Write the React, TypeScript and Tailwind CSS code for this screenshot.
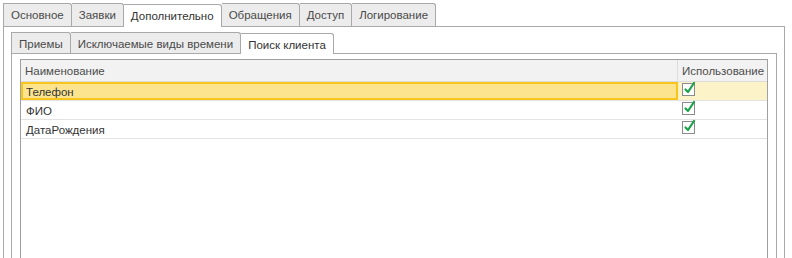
import React from 'react';

const outerTabs = ['Основное', 'Заявки', 'Дополнительно', 'Обращения', 'Доступ', 'Логирование'];
const innerTabs = ['Приемы', 'Исключаемые виды времени', 'Поиск клиента'];

const rows = [
  { name: 'Телефон', used: true },
  { name: 'ФИО', used: true },
  { name: 'ДатаРождения', used: true },
];

function CheckBox() {
  return (
    <svg width="17" height="17" viewBox="0 0 17 17" className="block">
      <rect x="0.5" y="3.5" width="12" height="12" fill="#fff" stroke="#8c8c8c" />
      <path d="M3.5 9.5 L6 12 L12 3" fill="none" stroke="#1aa34a" strokeWidth="2.2" strokeLinecap="round" strokeLinejoin="round" />
    </svg>
  );
}

function Tabs({ items, active, height }: { items: string[]; active: number; height: string }) {
  return (
    <div className="flex items-end">
      {items.map((t, i) => (
        <div
          key={t}
          className={
            i === active
              ? `relative z-10 -mb-px ${height} px-[7px] pt-[4px] bg-white border-t border-r border-[#a9a9a9] rounded-tr-[3px] text-[#333]`
              : `${height} px-[7px] pt-[4px] bg-[#ececec] border-t border-r border-[#a9a9a9] ${i === 0 ? 'border-l' : ''} rounded-tr-[3px] text-[#4a4a4a]`
          }
        >
          {t}
        </div>
      ))}
    </div>
  );
}

export default function App() {
  return (
    <div
      className="w-[792px] h-[258px] bg-white overflow-hidden pt-[3px] pl-[3px] text-[11.5px] leading-[14px]"
      style={{ fontFamily: '"Liberation Sans", Arial, sans-serif' }}
    >
      <Tabs items={outerTabs} active={2} height="h-[23px]" />
      <div className="w-[782px] h-[300px] border border-[#a9a9a9] pt-[5px] pl-[7px]">
        <Tabs items={innerTabs} active={2} height="h-[21px]" />
        <div className="w-[766px] h-[300px] border border-[#a9a9a9] pt-[5px] pl-[8px]">
          <div className="w-[748px] h-[300px] border border-[#a0a0a0]">
            <div className="flex h-[22px] bg-[#f2f2f2] border-b border-[#dcdcdc] text-[#4d4d4d]">
              <div className="w-[657px] pl-[4px] pt-[4px] border-r border-[#dcdcdc]">Наименование</div>
              <div className="flex-1 pl-[4px] pt-[4px]">Использование</div>
            </div>
            {rows.map((r, i) => (
              <div
                key={r.name}
                className={`flex h-[19px] border-b border-[#e3e3e3] ${i === 0 ? 'bg-[#fdf3c9]' : 'bg-white'}`}
              >
                <div
                  className={
                    i === 0
                      ? 'w-[657px] pl-[3px] pt-[1px] bg-[#fce38e] border-2 border-[#f8c51d] text-[#333]'
                      : 'w-[657px] pl-[5px] pt-[3px] text-[#333]'
                  }
                >
                  {r.name}
                </div>
                <div className="flex-1 pl-[4px] -mt-[2px]">
                  {r.used && <CheckBox />}
                </div>
              </div>
            ))}
          </div>
        </div>
      </div>
    </div>
  );
}
